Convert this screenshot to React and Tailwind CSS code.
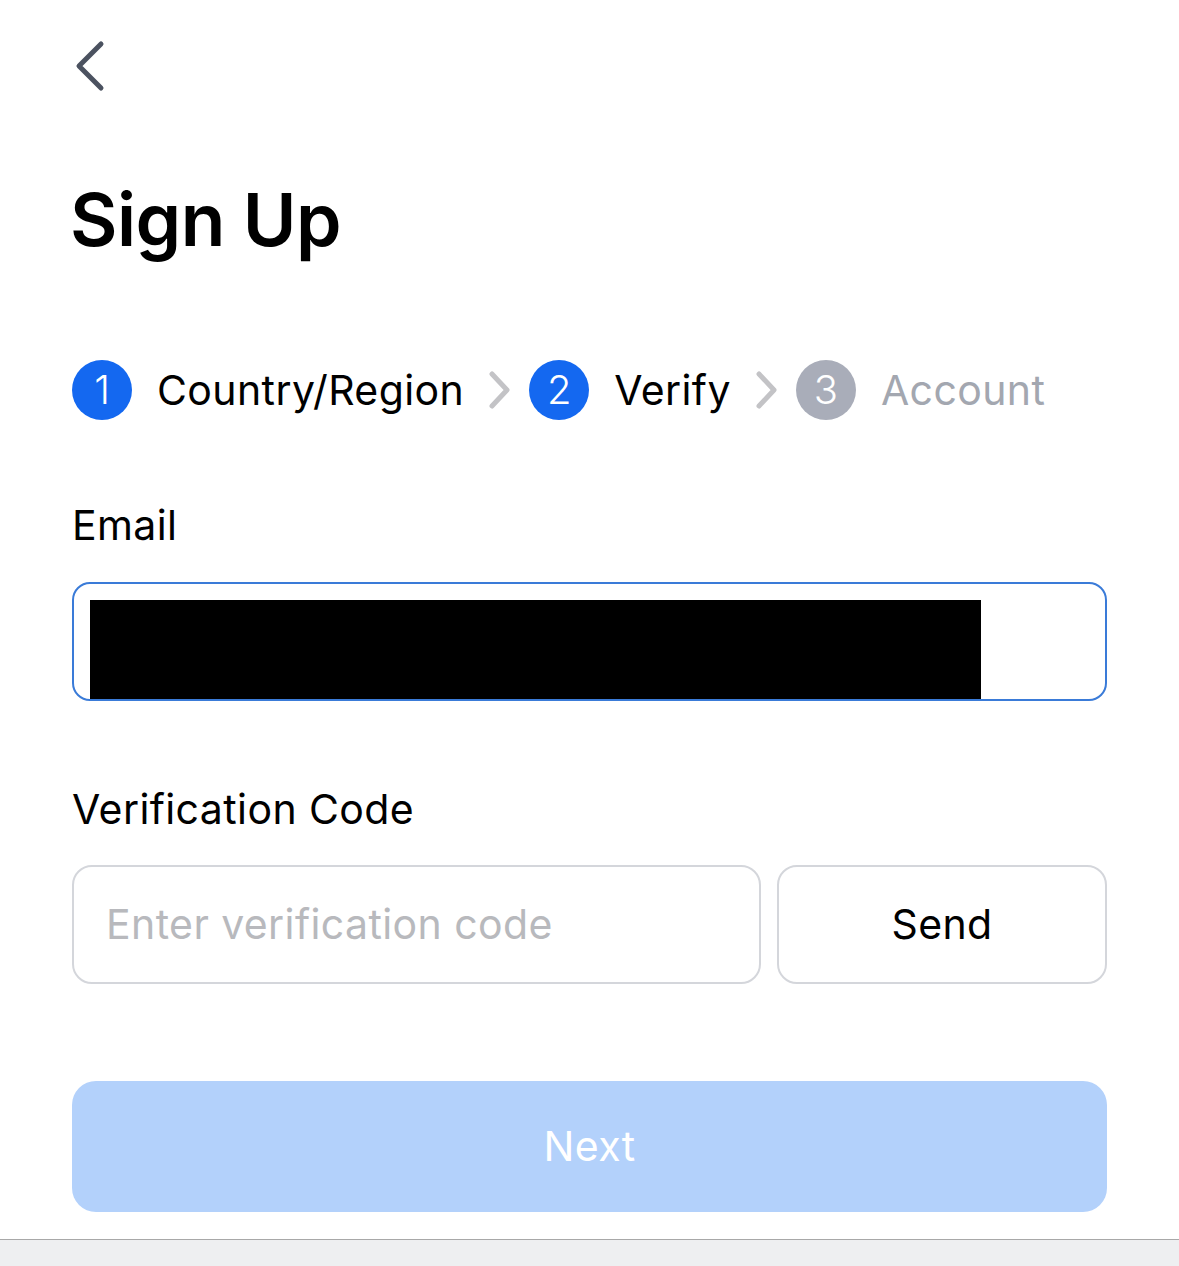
import React from "react";

function Step({ n, label, active }) {
  return (
    <div className="flex items-center">
      <div
        className={
          active
            ? "w-[60px] h-[60px] rounded-full bg-[#1468f0] text-white flex items-center justify-center text-[40px] font-light leading-none"
            : "w-[60px] h-[60px] rounded-full bg-[#a9adb9] text-white flex items-center justify-center text-[40px] font-light leading-none"
        }
      >
        {n}
      </div>
      <span
        className={
          active
            ? "ml-[25px] text-[41px] tracking-[0.4px] leading-none text-black"
            : "ml-[25px] text-[41px] tracking-[0.4px] leading-none text-[#a3a7b0]"
        }
      >
        {label}
      </span>
    </div>
  );
}

function Chevron() {
  return (
    <svg width="26" height="42" viewBox="0 0 26 42" className="ml-[22px] mr-[17px]">
      <path d="M6 5 L21 21 L6 37" fill="none" stroke="#c3c3c6" strokeWidth="5" strokeLinecap="round" strokeLinejoin="round" />
    </svg>
  );
}

export default function App() {
  return (
    <div className="w-full h-[1266px] bg-white flex flex-col font-['Inter','Liberation_Sans',sans-serif]">
      <div className="flex-1 px-[72px]">
        {/* Back */}
        <div className="pt-[40px]">
          <svg width="34" height="52" viewBox="0 0 34 52" className="ml-[1px]">
            <path d="M28 4 L6 26 L28 48" fill="none" stroke="#4b5260" strokeWidth="5" strokeLinecap="round" strokeLinejoin="round" />
          </svg>
        </div>

        <h1 className="mt-[91px] -ml-[2px] text-[73px] leading-none font-semibold text-black tracking-[-0.5px]">Sign Up</h1>

        {/* Steps */}
        <div className="mt-[104px] flex items-center">
          <Step n="1" label="Country/Region" active />
          <Chevron />
          <Step n="2" label="Verify" active />
          <Chevron />
          <Step n="3" label="Account" />
        </div>

        {/* Email */}
        <div className="mt-[85px] text-[41px] tracking-[0.4px] leading-none text-black">Email</div>
        <div className="mt-[36px] h-[119px] rounded-[18px] border-[2.5px] border-[#3a7bd8] pl-[16px] pr-[124px] pt-[16px] flex">
          <div className="flex-1 bg-black" />
        </div>

        {/* Verification code */}
        <div className="mt-[88px] text-[41px] tracking-[0.4px] leading-none text-black">Verification Code</div>
        <div className="mt-[35px] flex gap-[16px]">
          <div className="w-[689px] h-[119px] rounded-[20px] border-2 border-[#d4d6db] flex items-center pl-[32px] text-[41px] tracking-[0.4px] text-[#b8b9bd]">
            Enter verification code
          </div>
          <button className="flex-1 h-[119px] rounded-[20px] border-2 border-[#d4d6db] bg-white text-[41px] tracking-[0.4px] text-black flex items-center justify-center">
            Send
          </button>
        </div>

        {/* Next */}
        <button className="mt-[97px] w-full h-[131px] rounded-[24px] bg-[#b3d1fb] text-white text-[41px] tracking-[0.4px] flex items-center justify-center">
          Next
        </button>
      </div>
      <div className="h-[27px] bg-[#eeeff1] border-t border-[#a8a8a8]" />
    </div>
  );
}
